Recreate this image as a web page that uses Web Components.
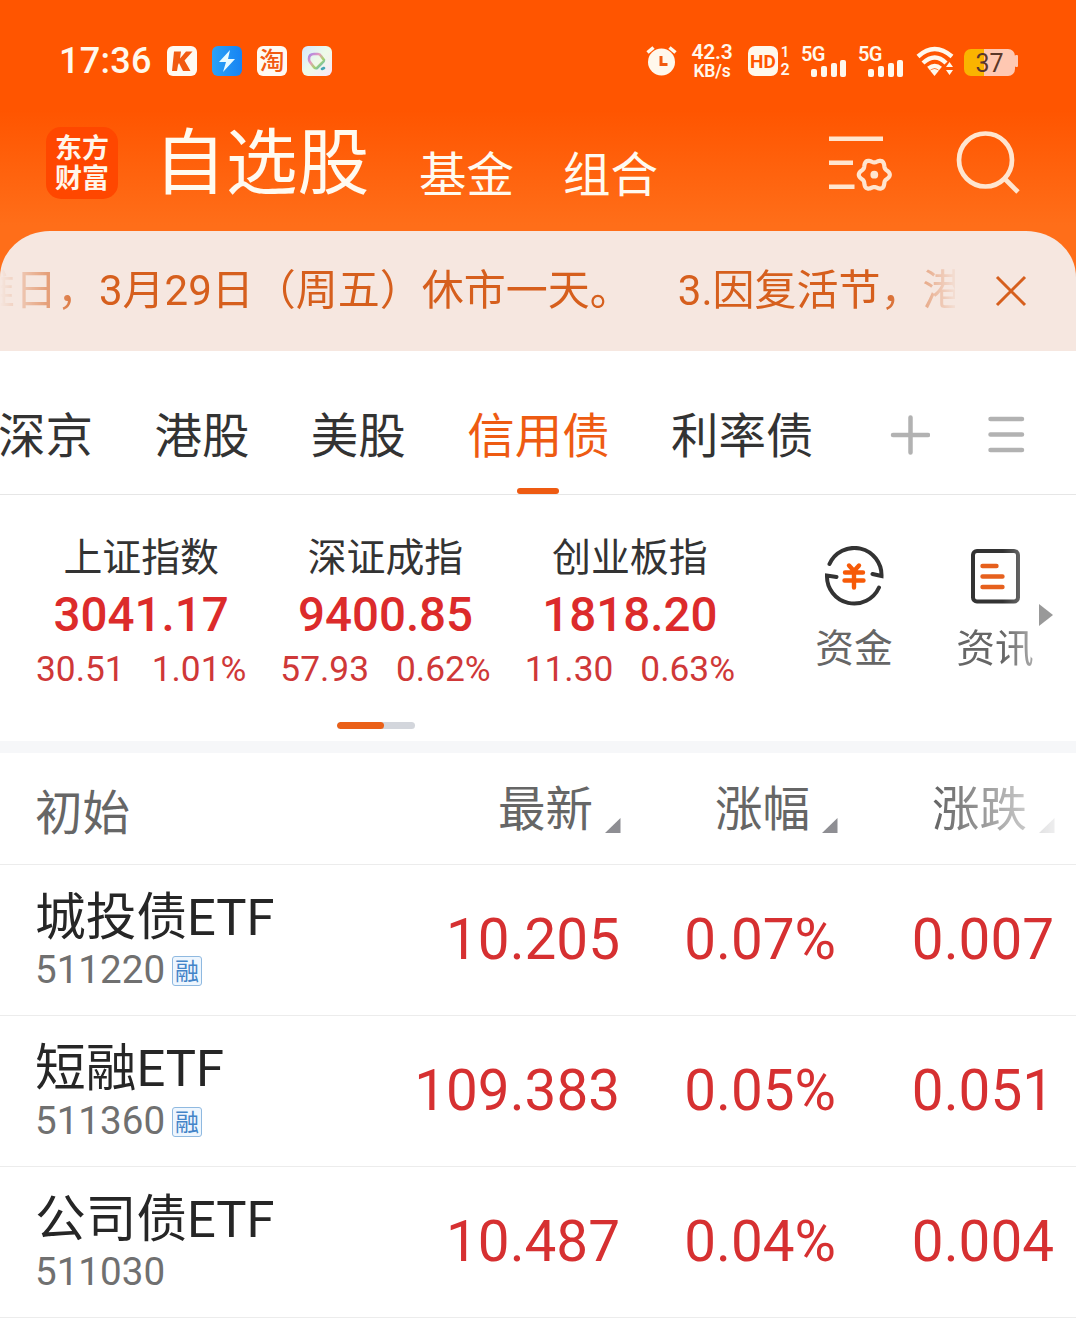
<!DOCTYPE html>
<html lang="zh-CN">
<head>
<meta charset="utf-8">
<title>自选股</title>
<style>
html,body{margin:0;padding:0;background:#fff}
body{font-family:Roboto,"Noto Sans CJK SC",sans-serif;width:1076px;height:1344px;overflow:hidden}
</style>
</head>
<body>
<watch-app></watch-app>
<script>
const define = (name, css, html) => customElements.define(name, class extends HTMLElement {
  constructor() {
    super();
    const root = this.attachShadow({ mode: 'open' });
    const body = typeof html === 'function' ? html(this) : html;
    root.innerHTML = `<style>*{box-sizing:border-box}svg{display:block;flex:none}${css}</style>${body}`;
  }
});

// six-lobed gear outline around a centre point
const gear = (cx, cy) => 'M' + Array.from({ length: 120 }, (_, i) => {
  const t = i * Math.PI / 60, r = 13.9 + 1.6 * Math.cos(6 * t);
  return (cx + r * Math.cos(t)).toFixed(2) + ' ' + (cy + r * Math.sin(t)).toFixed(2);
}).join('L') + 'Z';

define('status-bar', `
:host{display:flex;align-items:center;height:122px;padding-left:59px;color:#fff8ec}
.time{font-weight:500;font-size:36px;line-height:40px;width:108px;letter-spacing:.3px}
.apps{display:flex;gap:15px;width:479px}
.app{width:30px;height:30px;border-radius:6px;background:#fffaf2;display:flex;align-items:center;justify-content:center;color:#f15a10;font-size:25px;line-height:30px;font-weight:500}
.app span{padding-top:2px}
.flash{background:linear-gradient(90deg,#2ba2f6,#1683f3)}
.pastel{background:linear-gradient(135deg,#d5e6ff,#eefbe8 50%,#f9e4f8)}
.speed{width:48px;margin-left:11px;text-align:center;font-size:21px;line-height:20px;font-weight:600;letter-spacing:-.2px}
.speed div+div{font-size:17.500px;line-height:18px}
.hd{width:30px;height:30px;border-radius:7px;background:#fff8ec;color:#ff5500;font-size:19px;line-height:31px;text-align:center;font-weight:700;margin-left:12px}
.sim{font-size:15px;line-height:17px;font-weight:600;width:12px;text-align:center;margin-left:1px}
.sim div+div{font-size:16px;line-height:18px}
.sig{display:flex;flex-direction:column;width:46px;margin-left:10px}
.sig span{font-size:20px;line-height:16px;font-weight:600;letter-spacing:-.6px}
.sig svg{align-self:flex-end;margin-top:-2px}
.bat{width:51px;height:27px;border-radius:7px;background:linear-gradient(90deg,#fab400 20px,#ffc8b2 20px);color:#5b3728;font-size:25px;line-height:29px;text-align:center;margin-top:2px}
`, `
<div class="time">17:36</div>
<div class="apps">
 <div class="app"><svg width="30" height="30" viewBox="0 0 30 30"><path fill="#f15a10" d="M7 5.500h7l-1 7 6-7h6.500l-8 9 6 10.500h-7.500l-4-8-1 2-1 6H5z"/></svg></div>
 <div class="app flash"><svg width="30" height="30" viewBox="0 0 30 30"><path fill="#e8fbff" d="M18 4 7 16h7l-3 10 12-13h-7z"/></svg></div>
 <div class="app"><span>淘</span></div>
 <div class="app pastel"><svg width="30" height="30" viewBox="0 0 30 30" fill="none" stroke-width="2.600" stroke-linecap="round" stroke-linejoin="round"><defs><linearGradient id="r" x1="0" y1="0" x2="1" y2="1"><stop stop-color="#a985e8"/><stop offset=".35" stop-color="#e79bbd"/><stop offset=".65" stop-color="#a7d46c"/><stop offset="1" stop-color="#49a8e8"/></linearGradient></defs><path stroke="url(#r)" d="M7 13q0-5 5-5h4q2 0 3 2l3 4q0 2-2 3l-5 5q-2 1-4-2l-3-4q-1-1-1-3z"/><path stroke="#43a5b5" d="M20 23l2-1"/></svg></div>
</div>
<svg width="31" height="30" viewBox="0 0 31 30"><circle cx="15.500" cy="16" r="13.500" fill="#fff8ec"/><path d="M1.500 6.500l6-5M29.500 6.500l-6-5" stroke="#fff8ec" stroke-width="3.500"/><path d="M15 10v8.500h6.500" fill="none" stroke="#f15a10" stroke-width="3"/></svg>
<div class="speed"><div>42.3</div><div>KB/s</div></div>
<div class="hd">HD</div>
<div class="sim"><div>1</div><div>2</div></div>
<div class="sig"><span>5G</span><svg width="36" height="17" viewBox="0 0 36 17" fill="#fff8ec"><rect y="9" width="6" height="8" rx="2"/><rect x="10" y="6" width="6" height="11" rx="2"/><rect x="20" y="3" width="6" height="14" rx="2"/><rect x="29" width="6" height="17" rx="2"/></svg></div>
<div class="sig" style="margin-left:11px"><span>5G</span><svg width="36" height="17" viewBox="0 0 36 17" fill="#fff8ec"><rect y="9" width="6" height="8" rx="2"/><rect x="10" y="6" width="6" height="11" rx="2"/><rect x="20" y="3" width="6" height="14" rx="2"/><rect x="29" width="6" height="17" rx="2"/></svg></div>
<svg style="margin:0 9px 0 12px" width="39" height="30" viewBox="0 0 39 30" fill="none" stroke="#fff8ec" stroke-width="4.400"><path d="M2 10.500q16.500-15 34 0M7 17q12-11 23 0M12.500 22.500q6.500-5 12 0"/><path d="M14 24.500q4.500-3 9 0l-4.500 5.500z" fill="#fff8ec" stroke="none"/><path d="M30 21l3.500-5 3.500 5zM30 24l3.500 5 3.500-5z" fill="#fff8ec" stroke="none"/></svg>
<div class="bat">37</div><svg width="3" height="12"><rect width="3" height="12" rx="1" fill="#ffc8b2"/></svg>
`);

define('app-header', `
:host{display:flex;height:109px;padding-left:46px;align-items:flex-start;color:#fffaf0}
.logo{width:72px;height:72px;border-radius:15px;background:#ff4700;margin-top:5px;font-weight:700;font-size:27px;line-height:30px;text-align:center;padding-top:7px;color:#fff6ea}
.main{font-size:71.800px;line-height:80px;margin-left:36px;margin-top:2px;width:265px;white-space:nowrap}
.sub{font-size:47.500px;line-height:54px;width:144px;margin-top:27px;white-space:nowrap}
.set{margin:12px 0 0 121px}.search{margin:7px 0 0 62px}
`, `
<div class="logo">东方<br>财富</div>
<div class="main">自选股</div><div class="sub">基金</div><div class="sub">组合</div>
<svg class="set" width="66" height="60" viewBox="828 134 66 60" fill="none" stroke="#ffe5cf" stroke-width="4.600"><path d="M829 138.700h54M829 162.700h24M829 186.700h25.500"/><path stroke-linejoin="round" stroke-width="4.200" d="${gear(874.3, 174.7)}"/><circle cx="874.300" cy="174.700" r="3.900" fill="#ffe5cf" stroke="none"/></svg>
<svg class="search" width="66" height="68" viewBox="956 129 66 68" fill="none" stroke="#ffe5cf" stroke-width="4.700"><circle cx="985.500" cy="160" r="26.500"/><path d="M1004 178l14 14"/></svg>
`);

define('notice-banner', `
:host{display:flex;height:120px;background:#f6e7e0;border-radius:50px 50px 0 0/46px 46px 0 0;align-items:center}
.clip{width:955px;overflow:hidden;white-space:pre;font-size:42px;line-height:60px;color:#d65f1d;-webkit-mask-image:linear-gradient(90deg,transparent,#000 90px,#000 880px,transparent 960px);mask-image:linear-gradient(90deg,transparent,#000 90px,#000 880px,transparent 960px)}
.run{display:flex;width:1100px;margin-left:-27px;gap:46px}
svg{margin-left:40px}
`, `
<div class="clip"><div class="run"><span>难日，3月29日（周五）休市一天。</span><span>3.因复活节，港</span></div></div>
<svg width="32" height="32" viewBox="0 0 32 32" stroke="#d65f1d" stroke-width="3"><path d="M2 2l28 28M30 2L2 30"/></svg>
`);

define('market-tabs', `
:host{display:flex;height:144px;border-bottom:1px solid #e6e6e6;background:#fff;align-items:flex-start}
nav{display:flex;gap:61.400px;margin-left:-2px;width:892px;white-space:nowrap;font-size:47.500px;line-height:56px;color:#333;height:143px;padding-top:58px}
nav div{display:flex;flex-direction:column;align-items:center;height:85px}
.on{color:#ee5b12}.on i{width:42px;height:6px;border-radius:3px;background:#ee5b12;margin-top:23px}
svg{margin-top:64px}
`, `
<nav><div>深京</div><div>港股</div><div>美股</div><div class="on">信用债<i></i></div><div>利率债</div></nav>
<svg width="40" height="40" viewBox="0 0 40 40" stroke="#b2b2b2" stroke-width="4.500" stroke-linecap="round"><path d="M3 20h35M20.500 2.500v35"/></svg>
<svg style="margin-left:58px" width="40" height="40" viewBox="0 0 40 40" stroke="#b2b2b2" stroke-width="4.500" stroke-linecap="round"><path d="M2.500 4h31.500M2.500 19.500h31.500M2.500 35h31.500"/></svg>
`);

define('index-card', `
:host{display:flex;flex-direction:column;align-items:center;width:244.500px}
.n{font-size:38.900px;line-height:46px;color:#333}
.v{font-size:47.500px;line-height:54px;font-weight:500;color:#dc2b2b;margin-top:7px}
.c{display:flex;gap:27px;font-size:35.300px;line-height:44px;color:#cf3838;margin-top:5px}
`, el => `<div class="n"><slot></slot></div><div class="v">${el.getAttribute('value')}</div><div class="c"><span>${el.getAttribute('diff')}</span><span>${el.getAttribute('rate')}</span></div>`);

define('shortcut-link', `
:host{display:flex;flex-direction:column;align-items:center;width:78px;font-size:38.700px;line-height:46px;color:#666;white-space:nowrap;gap:20px}
`, `<slot name="icon"></slot><span><slot></slot></span>`);

define('index-strip', `
:host{display:flex;height:258px;border-bottom:12px solid #f6f7f9;background:#fff}
.left{width:752px;display:flex;flex-direction:column;align-items:center}
.cards{display:flex;width:752px;padding:40px 0 0 19px;height:227px}
.bar{width:78px;height:7px;border-radius:4px;background:#d3d6dc;display:flex;overflow:hidden}
.bar i{width:47px;background:#ea6018;border-radius:4px}
.right{display:flex;padding:51px 0 0 63px;gap:63px}
.fade{-webkit-mask-image:linear-gradient(90deg,#000 60%,rgba(0,0,0,.6) 95%);mask-image:linear-gradient(90deg,#000 60%,rgba(0,0,0,.6) 95%)}
.arrow{margin:108px 0 0 5px}
`, `
<div class="left"><div class="cards">
<index-card value="3041.17" diff="30.51" rate="1.01%">上证指数</index-card>
<index-card value="9400.85" diff="57.93" rate="0.62%">深证成指</index-card>
<index-card value="1818.20" diff="11.30" rate="0.63%">创业板指</index-card>
</div><div class="bar"><i></i></div></div>
<div class="right">
<shortcut-link><svg slot="icon" width="60" height="60" viewBox="824 546 60 60" fill="none" stroke="#333" stroke-width="4"><path stroke-linecap="round" d="M829.500 564A27.200 27.200 0 0 1 881.500 576L872.500 574M836.500 577L827 575.500A27.200 27.200 0 0 0 879 587.500"/><path stroke="#f65a08" stroke-width="4.400" stroke-linecap="round" d="M849 565.500l5 5.500 5-5.500M845 572.500h18M844.500 580.500h19M854 571v16.500"/></svg>资金</shortcut-link>
<shortcut-link class="fade"><svg slot="icon" width="60" height="60" viewBox="965 546 60 60" fill="none" stroke="#333" stroke-width="4"><rect x="973" y="551" width="45" height="50.500" rx="4"/><path stroke="#e6601d" stroke-width="4.400" stroke-linecap="round" d="M982.500 566h14M982.500 576.500h20M982.500 587h20"/></svg>资讯</shortcut-link>
</div>
<svg class="arrow" width="15" height="24" viewBox="0 0 15 24"><path fill="#999" d="M0 1l14 11L0 23z"/></svg>
`);

define('sort-head', `
:host{display:flex;justify-content:flex-end;align-items:flex-end;font-size:47.500px;line-height:56px;height:56px;color:#666;gap:12px}
svg{margin-bottom:5px}
:host([fade]){-webkit-mask-image:linear-gradient(90deg,#000 45%,rgba(0,0,0,.15));mask-image:linear-gradient(90deg,#000 45%,rgba(0,0,0,.15))}
`, `<span><slot></slot></span><svg width="16" height="15"><path fill="#8e8e93" d="M0 15L15.500 0v15z"/></svg>`);

define('quote-head', `
:host{display:grid;grid-template-columns:370px 216px 217px 217px;height:112px;padding:29px 0 0 35px;border-bottom:1px solid #ececec;background:#fff}
.first{font-size:47.500px;line-height:56px;color:#666;margin-top:4px}
`, `<div class="first">初始</div><sort-head>最新</sort-head><sort-head>涨幅</sort-head><sort-head fade>涨跌</sort-head>`);

define('quote-row', `
:host{display:grid;grid-template-columns:370px 215px 216px 218px;height:151px;padding-left:35px;border-bottom:1px solid #ececec;background:#fff}
.name{font-size:50.700px;line-height:58px;color:#262626;padding-top:24px;white-space:nowrap}
.code{display:flex;align-items:center;gap:7px;font-size:38.600px;line-height:46px;height:46px;color:#707070}
.tag{width:30px;height:30px;border:1.500px solid #8fb9e0;border-radius:3px;background:#eef6fe;color:#4384c8;font-size:24px;line-height:30px;text-align:center;margin-top:2px;display:flex;justify-content:center}
.num{font-size:56.600px;line-height:66px;color:#d63031;text-align:right;padding-top:42px}
`, el => {
  const a = n => el.getAttribute(n);
  return `<div><div class="name"><slot></slot></div><div class="code">${a('code')}${el.hasAttribute('margin') ? '<span class="tag">融</span>' : ''}</div></div>
<div class="num">${a('price')}</div><div class="num">${a('rate')}</div><div class="num">${a('diff')}</div>`;
});

define('watch-app', `
:host{display:block;width:1076px;height:1344px;background:#fff}
.top{background:linear-gradient(#ff5500 0,#ff5500 110px,#ff6e19 225px,#ff6e19)}
`, `
<div class="top"><status-bar></status-bar><app-header></app-header><notice-banner></notice-banner></div>
<market-tabs></market-tabs>
<index-strip></index-strip>
<quote-head></quote-head>
<quote-row code="511220" margin price="10.205" rate="0.07%" diff="0.007">城投债ETF</quote-row>
<quote-row code="511360" margin price="109.383" rate="0.05%" diff="0.051">短融ETF</quote-row>
<quote-row code="511030" price="10.487" rate="0.04%" diff="0.004">公司债ETF</quote-row>
`);
</script>
</body>
</html>
